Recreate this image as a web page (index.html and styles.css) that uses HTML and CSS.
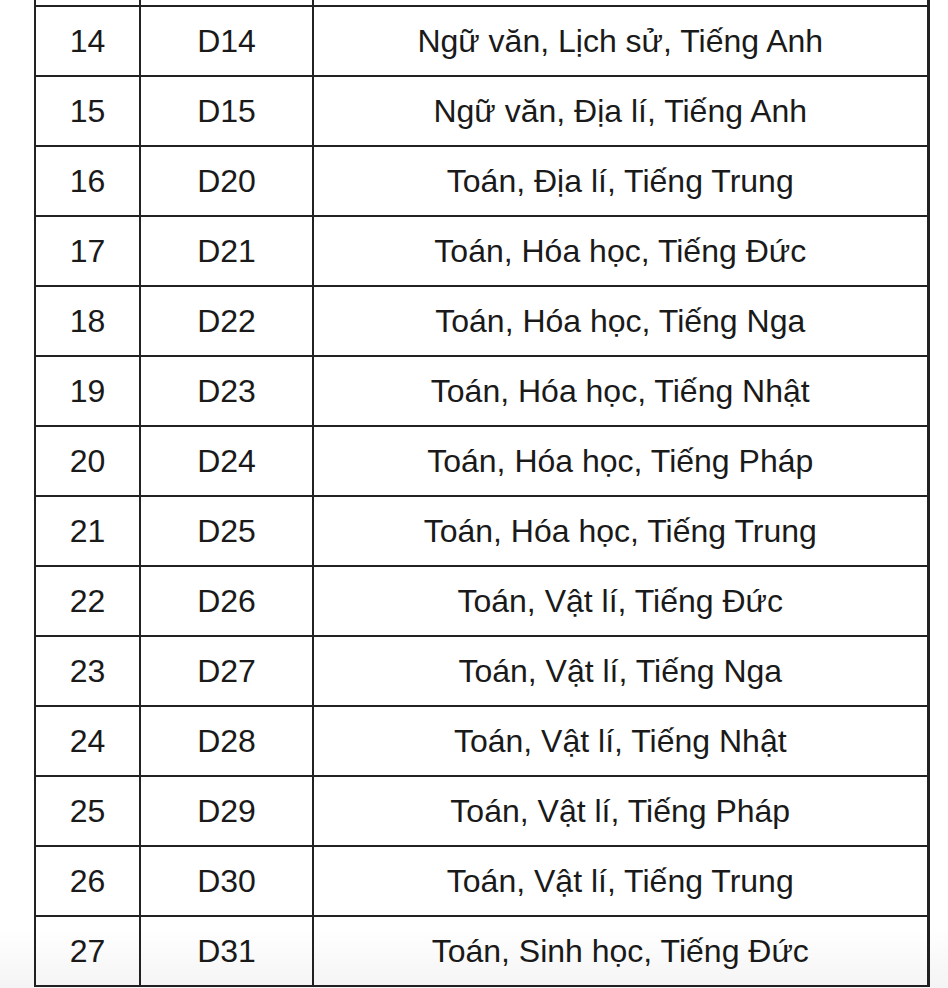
FILE: index.html
```html
<!DOCTYPE html>
<html lang="vi">
<head>
<meta charset="utf-8">
<title>Tổ hợp môn</title>
<link rel="stylesheet" href="styles.css">
</head>
<body>
<div class="wrap">
<table class="blocks">
<colgroup><col class="c1"><col class="c2"><col class="c3"></colgroup>
<tbody>
<tr><td></td><td></td><td></td></tr>
<tr><td>14</td><td>D14</td><td>Ngữ văn, Lịch sử, Tiếng Anh</td></tr>
<tr><td>15</td><td>D15</td><td>Ngữ văn, Địa lí, Tiếng Anh</td></tr>
<tr><td>16</td><td>D20</td><td>Toán, Địa lí, Tiếng Trung</td></tr>
<tr><td>17</td><td>D21</td><td>Toán, Hóa học, Tiếng Đức</td></tr>
<tr><td>18</td><td>D22</td><td>Toán, Hóa học, Tiếng Nga</td></tr>
<tr><td>19</td><td>D23</td><td>Toán, Hóa học, Tiếng Nhật</td></tr>
<tr><td>20</td><td>D24</td><td>Toán, Hóa học, Tiếng Pháp</td></tr>
<tr><td>21</td><td>D25</td><td>Toán, Hóa học, Tiếng Trung</td></tr>
<tr><td>22</td><td>D26</td><td>Toán, Vật lí, Tiếng Đức</td></tr>
<tr><td>23</td><td>D27</td><td>Toán, Vật lí, Tiếng Nga</td></tr>
<tr><td>24</td><td>D28</td><td>Toán, Vật lí, Tiếng Nhật</td></tr>
<tr><td>25</td><td>D29</td><td>Toán, Vật lí, Tiếng Pháp</td></tr>
<tr><td>26</td><td>D30</td><td>Toán, Vật lí, Tiếng Trung</td></tr>
<tr><td>27</td><td>D31</td><td>Toán, Sinh học, Tiếng Đức</td></tr>
<tr class="stub"><td></td><td></td><td></td></tr>
</tbody>
</table>
</div>
<div class="shade"></div>
</body>
</html>
```
FILE: styles.css
```css
html, body {
  margin: 0;
  padding: 0;
  background: #fff;
  overflow: hidden;
}
body {
  font-family: "Liberation Sans", Arial, sans-serif;
  color: #1a1a1a;
}
.wrap {
  padding-left: 34px;
  margin-top: -65px;
}
.blocks {
  border-collapse: collapse;
  width: 893px;
  table-layout: fixed;
}
.c1 { width: 105px; }
.c2 { width: 173px; }
.c3 { width: 615px; }
.blocks td {
  border: 2px solid #222;
  height: 68px;
  padding: 0;
  text-align: center;
  vertical-align: middle;
  font-size: 32px;
  line-height: 36px;
}
.blocks td:last-child {
  border-right-width: 3px;
}
.blocks .stub td {
  height: 0;
  border-bottom: 0;
}
.shade {
  position: fixed;
  left: 0;
  right: 0;
  bottom: 0;
  height: 60px;
  pointer-events: none;
  background: linear-gradient(to bottom, rgba(0,0,0,0) 0%, rgba(0,0,0,0.045) 100%);
}
```
